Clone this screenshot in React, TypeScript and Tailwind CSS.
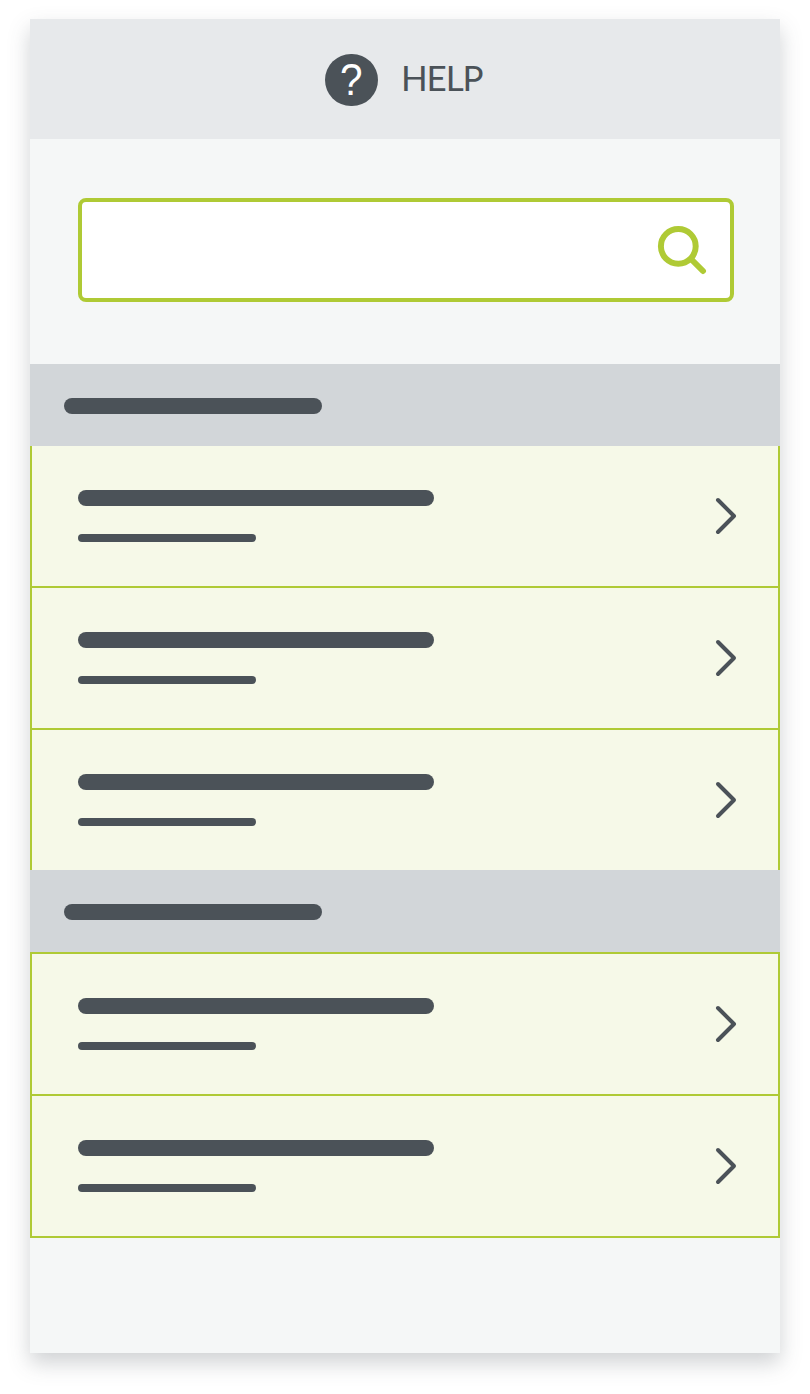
function Chevron() {
  return (
    <svg width="24" height="40" viewBox="0 0 24 40" fill="none" className="text-[#4b5258]" aria-hidden="true">
      <path d="M4 4 L20 20 L4 36" stroke="currentColor" strokeWidth="4" strokeLinecap="round" strokeLinejoin="round" />
    </svg>
  );
}

function SearchIcon() {
  return (
    <svg width="50" height="50" viewBox="0 0 50 50" fill="none" className="text-[#afca35]" aria-hidden="true">
      <circle cx="21.3" cy="21.3" r="17.4" stroke="currentColor" strokeWidth="6" />
      <path d="M34 34 L46 46" stroke="currentColor" strokeWidth="6" strokeLinecap="round" />
    </svg>
  );
}

function SectionHeader() {
  return (
    <div className="flex h-[82px] shrink-0 items-center bg-[#d2d6d9] px-[34px] pt-0.5">
      <div className="h-4 w-[258px] rounded-lg bg-[#4b5258]" />
    </div>
  );
}

function Row() {
  return (
    <li className="flex h-[140px] items-center justify-between bg-[#f6f9e8] pr-10 pl-[46px]">
      <div className="flex flex-col gap-7">
        <div className="h-4 w-[356px] rounded-lg bg-[#4b5258]" />
        <div className="h-2 w-[178px] rounded bg-[#4b5258]" />
      </div>
      <Chevron />
    </li>
  );
}

const listClass = "divide-y-2 divide-[#afca35] border-x-2 border-[#afca35] [&>li]:box-content";

export default function App() {
  return (
    <div className="flex h-[1394px] w-[810px] justify-center overflow-hidden bg-white pt-[19px] font-['Lato',sans-serif] text-[#4b5258]">
      <main className="flex h-[1334px] w-[750px] flex-col bg-[#f5f7f7] shadow-[0_10px_20px_rgba(75,82,88,0.26)]">
        <header className="flex h-[120px] shrink-0 gap-[23px] bg-[#e7e9eb] pt-[35px] pl-[295px]">
          <div className="flex h-[52px] w-[53px] items-center justify-center rounded-full bg-[#4b5258] font-['Liberation_Sans',sans-serif] text-[44px] leading-[52px] text-white">
            <span className="inline-block scale-x-[0.92]">?</span>
          </div>
          <h1 className="text-[35px] leading-[46px] tracking-[-1.1px]">HELP</h1>
        </header>
        <div className="h-[225px] shrink-0 pt-[59px] pr-[46px] pl-12">
          <div className="flex h-[104px] items-center justify-end rounded-lg border-4 border-[#afca35] bg-white pr-[23px]">
            <SearchIcon />
          </div>
        </div>
        <SectionHeader />
        <ul className={listClass}>
          <Row />
          <Row />
          <Row />
        </ul>
        <SectionHeader />
        <ul className={`${listClass} border-y-2`}>
          <Row />
          <Row />
        </ul>
      </main>
    </div>
  );
}
